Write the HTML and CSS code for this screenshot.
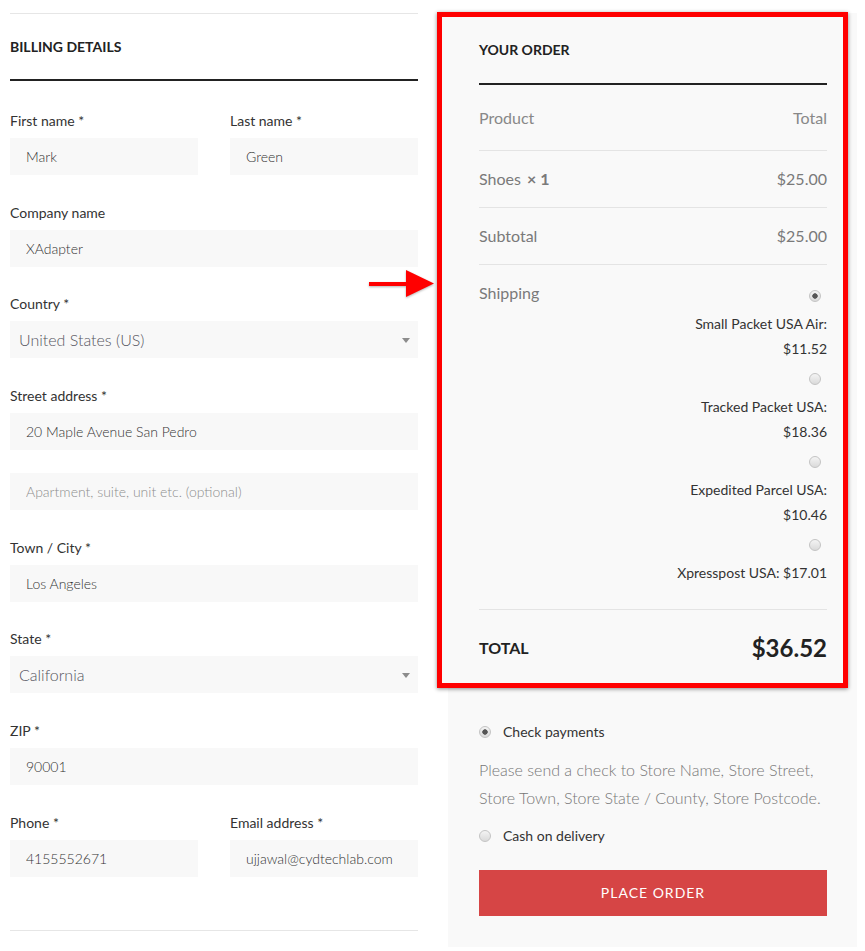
FILE: index.html
```html
<!DOCTYPE html>
<html lang="en">
<head>
    <meta charset="UTF-8">
    <meta name="viewport" content="width=device-width, initial-scale=1.0">
    <title>Checkout</title>
    <link rel="stylesheet" href="styles.css">
</head>
<body>
    <div class="checkout">
        <section class="billing">
            <h3>Billing details</h3>
            <div class="fields">
                <div class="pair">
                    <div class="field">
                        <label>First name *</label>
                        <input type="text" value="Mark">
                    </div>
                    <div class="field">
                        <label>Last name *</label>
                        <input type="text" value="Green">
                    </div>
                </div>
                <div class="field">
                    <label>Company name</label>
                    <input type="text" value="XAdapter">
                </div>
                <div class="field">
                    <label>Country *</label>
                    <div class="select-wrap">
                        <select><option>United States (US)</option></select>
                    </div>
                </div>
                <div class="field">
                    <label>Street address *</label>
                    <input type="text" value="20 Maple Avenue San Pedro">
                    <input type="text" class="extra" placeholder="Apartment, suite, unit etc. (optional)">
                </div>
                <div class="field">
                    <label>Town / City *</label>
                    <input type="text" value="Los Angeles">
                </div>
                <div class="field">
                    <label>State *</label>
                    <div class="select-wrap">
                        <select><option>California</option></select>
                    </div>
                </div>
                <div class="field">
                    <label>ZIP *</label>
                    <input type="text" value="90001">
                </div>
                <div class="pair">
                    <div class="field">
                        <label>Phone *</label>
                        <input type="text" value="4155552671">
                    </div>
                    <div class="field">
                        <label>Email address *</label>
                        <input type="text" value="ujjawal@cydtechlab.com">
                    </div>
                </div>
            </div>
        </section>

        <!-- annotation arrow pointing at the order box -->
        <svg class="arrow" width="68" height="30" viewBox="0 0 68 30">
            <rect x="1" y="13" width="40" height="4" fill="#ff0000"/>
            <polygon points="38,1 66,14.5 38,28" fill="#ff0000"/>
        </svg>

        <section class="order-panel">
            <div class="highlight"></div>
            <h3>Your order</h3>
            <div class="order-row head">
                <span>Product</span>
                <span>Total</span>
            </div>
            <div class="order-row">
                <span>Shoes <strong class="qty">&times; 1</strong></span>
                <span>$25.00</span>
            </div>
            <div class="order-row">
                <span>Subtotal</span>
                <span>$25.00</span>
            </div>
            <div class="order-row shipping">
                <span>Shipping</span>
                <ul class="ship-options">
                    <li>
                        <input type="radio" name="ship" checked>
                        <label>Small Packet USA Air: $11.52</label>
                    </li>
                    <li>
                        <input type="radio" name="ship">
                        <label>Tracked Packet USA: $18.36</label>
                    </li>
                    <li>
                        <input type="radio" name="ship">
                        <label>Expedited Parcel USA: $10.46</label>
                    </li>
                    <li>
                        <input type="radio" name="ship">
                        <label>Xpresspost USA: $17.01</label>
                    </li>
                </ul>
            </div>
            <div class="order-row total">
                <span>Total</span>
                <strong>$36.52</strong>
            </div>

            <div class="payment">
                <div class="pay-method">
                    <input type="radio" name="pay" checked>
                    <label>Check payments</label>
                </div>
                <p class="pay-desc">Please send a check to Store Name, Store Street, Store Town, Store State / County, Store Postcode.</p>
                <div class="pay-method">
                    <input type="radio" name="pay">
                    <label>Cash on delivery</label>
                </div>
                <button class="place-order">Place order</button>
            </div>
        </section>
    </div>
</body>
</html>
```

FILE: styles.css
```css
html, body {
    margin: 0;
    padding: 0;
}
body {
    font-family: Lato, "Open Sans", sans-serif;
    background-color: #FFFFFF;
    color: #333;
}
.checkout {
    position: relative;
    display: flex;
    gap: 30px;
    padding: 13px 0 0 10px;
}

/* radios */
input[type=radio] {
    appearance: none;
    -webkit-appearance: none;
    margin: 0;
    width: 12px;
    height: 12px;
    box-sizing: border-box;
    border-radius: 50%;
    border: 1px solid #c4c4c4;
    background: linear-gradient(#f4f4f4, #dadada);
}
input[type=radio]:checked {
    background: radial-gradient(circle, #555 2.4px, transparent 3px), linear-gradient(#f4f4f4, #dadada);
}

/* billing column */
.billing {
    width: 408px;
    border-top: 1px solid #e6e6e6;
}
.billing h3,
.order-panel h3 {
    margin: 0;
    font-size: 14px;
    line-height: 20px;
    font-weight: bold;
    text-transform: uppercase;
    color: #222;
    border-bottom: 2px solid #222;
}
.billing h3 {
    padding: 23px 0 22px;
}
.fields {
    padding: 30px 0 25px;
    border-bottom: 1px solid #e6e6e6;
}
.pair {
    display: grid;
    grid-template-columns: 1fr 1fr;
    column-gap: 32px;
}
.field {
    margin-bottom: 27.7px;
}
.field label {
    display: block;
    font-size: 14px;
    line-height: 20px;
    margin-bottom: 7px;
    color: #333;
}
.field input,
.field select {
    display: block;
    width: 100%;
    height: 37px;
    box-sizing: border-box;
    border: 0;
    background-color: #f8f8f8;
    font-family: inherit;
    font-size: 14px;
    font-weight: 300;
    color: #333;
    padding: 0 16px;
    outline: none;
}
.field input::placeholder {
    color: #8e8e8e;
}
.field .extra {
    margin-top: 23px;
}
.select-wrap {
    position: relative;
}
.select-wrap::after {
    content: "";
    position: absolute;
    right: 8px;
    top: 17px;
    border-left: 4px solid transparent;
    border-right: 4px solid transparent;
    border-top: 5px solid #8c8c8c;
}
.field select {
    appearance: none;
    -webkit-appearance: none;
    font-size: 16px;
    color: #55555e;
    padding-left: 9px;
}

/* annotation */
.arrow {
    position: absolute;
    left: 368px;
    top: 269px;
    filter: drop-shadow(0 1px 1px rgba(0, 0, 0, 0.3));
}

/* order column */
.order-panel {
    position: relative;
    z-index: 0;
    width: 409px;
    box-sizing: border-box;
    padding: 0 30px 31px 31px;
    background-color: #f9f9f9;
}
.highlight {
    position: absolute;
    z-index: -1;
    left: -11px;
    top: -1px;
    width: 411px;
    height: 676px;
    box-sizing: border-box;
    border: 5px solid #ff0000;
    background-color: #f9f9f9;
    box-shadow: 0 1px 4px rgba(0, 0, 0, 0.45);
}
.order-panel h3 {
    padding: 27px 0 23px;
}
.order-row {
    display: flex;
    justify-content: space-between;
    padding: 18px 0;
    font-size: 16px;
    line-height: 20px;
    color: #7a7a7a;
    border-bottom: 1px solid #e4e4e4;
}
.order-row.head {
    padding: 23px 0 22px;
    color: #888;
}
.order-row strong {
    font-weight: bold;
}
.order-row .qty {
    margin-left: 2px;
}
.order-row.shipping {
    align-items: flex-start;
    padding-bottom: 23px;
}
.ship-options {
    list-style: none;
    margin: 7px 0 0;
    padding: 0;
}
.ship-options li {
    margin-bottom: 12px;
}
.ship-options li:last-child {
    margin-bottom: 0;
}
.ship-options input[type=radio] {
    display: block;
    margin: 0 6px 10px auto;
}
.ship-options label {
    display: block;
    width: 160px;
    margin-left: auto;
    text-align: right;
    font-size: 14px;
    line-height: 24.5px;
    color: #333;
}
.order-row.total {
    align-items: center;
    padding: 23px 0 24px;
    border-bottom: 0;
    color: #222;
}
.order-row.total span {
    font-weight: bold;
    text-transform: uppercase;
}
.order-row.total strong {
    font-size: 24px;
    line-height: 30px;
}

/* payment */
.payment {
    margin-top: 35px;
}
.pay-method {
    display: flex;
    align-items: center;
    font-size: 14px;
    line-height: 20px;
    color: #333;
}
.pay-method input[type=radio] {
    margin-right: 12px;
}
.pay-desc {
    margin: 14px 0;
    font-size: 16px;
    font-weight: 300;
    line-height: 28px;
    color: #777;
}
.place-order {
    display: block;
    width: 100%;
    height: 46px;
    margin-top: 24px;
    border: 0;
    background-color: #d64545;
    color: #fff;
    font-family: inherit;
    font-size: 14px;
    letter-spacing: 1px;
    text-transform: uppercase;
}
```
